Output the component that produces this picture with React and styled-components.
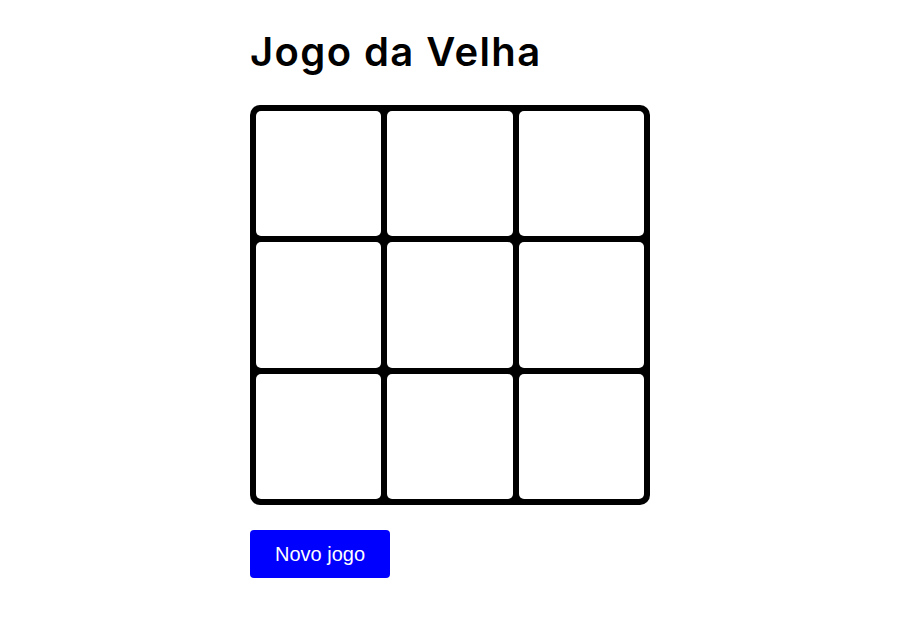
import styled, { createGlobalStyle } from "styled-components";
import { useState } from "react";

const GlobalStyle = createGlobalStyle`
  body {
    margin: 0;
    background: #fff;
    font-family: "Liberation Sans", Arial, sans-serif;
  }
`;

const App = () => {
  const [cells, setCells] = useState(Array(9).fill(""));
  const [turn, setTurn] = useState("X");

  const play = (i) => {
    if (cells[i]) return;
    const next = [...cells];
    next[i] = turn;
    setCells(next);
    setTurn(turn === "X" ? "O" : "X");
  };

  const reset = () => {
    setCells(Array(9).fill(""));
    setTurn("X");
  };

  return (
    <>
      <GlobalStyle />
      <Main>
        <Title>Jogo da Velha</Title>
        <Board>
          {cells.map((value, i) => (
            <Cell key={i} onClick={() => play(i)}>
              {value}
            </Cell>
          ))}
        </Board>
        <Button onClick={reset}>Novo jogo</Button>
      </Main>
    </>
  );
};

export default App;

const Main = styled.main`
  width: 404px;
  margin: 0 auto;
  padding-top: 22px;
  display: flex;
  flex-direction: column;
  align-items: flex-start;
`;

const Title = styled.h1`
  margin: 0 0 23px;
  font-family: Inter, "Noto Sans", sans-serif;
  font-weight: 600;
  font-size: 40px;
  line-height: 60px;
  letter-spacing: 1.4px;
  color: #000;
`;

const Board = styled.div`
  width: 400px;
  height: 400px;
  box-sizing: border-box;
  padding: 6px;
  display: grid;
  grid-template-columns: repeat(3, 1fr);
  grid-template-rows: repeat(3, 1fr);
  gap: 6px;
  background: #000;
  border-radius: 10px;
`;

const Cell = styled.div`
  background: #fff;
  border-radius: 5px;
  display: flex;
  align-items: center;
  justify-content: center;
  font-size: 64px;
  cursor: pointer;
`;

const Button = styled.button`
  margin-top: 25px;
  width: 140px;
  height: 48px;
  border: none;
  border-radius: 4px;
  background: #0000ff;
  color: #fff;
  font-family: "Liberation Sans", Arial, sans-serif;
  font-size: 20px;
  cursor: pointer;
`;
